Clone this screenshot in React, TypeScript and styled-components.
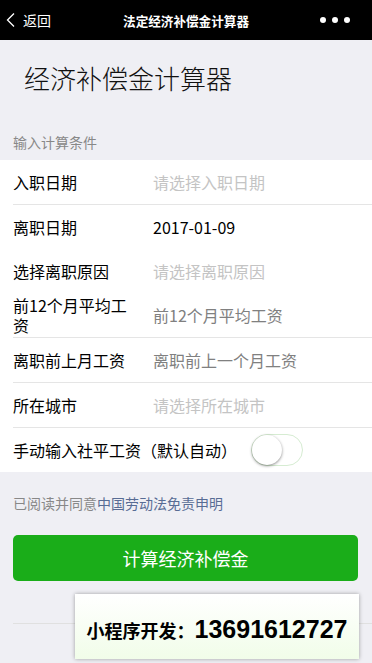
import React from 'react'
import styled, { createGlobalStyle } from 'styled-components'

const GlobalStyle = createGlobalStyle`
  html, body {
    margin: 0;
    padding: 0;
    background: #efeff4;
    font-family: 'Noto Sans CJK SC', 'Noto Sans', sans-serif;
  }
  * {
    box-sizing: border-box;
  }
`

const Page = styled.div`
  display: flex;
  flex-direction: column;
  width: 372px;
  min-height: 663px;
  background: #efeff4;
  position: relative;
`

// top navigation bar
const NavBar = styled.div`
  display: flex;
  align-items: center;
  height: 40px;
  background: #000;
  color: #fff;
  padding: 0 5px;
`

const NavSide = styled.div<{ $end?: boolean }>`
  width: 80px;
  display: flex;
  align-items: center;
  justify-content: ${(p) => (p.$end ? 'flex-end' : 'flex-start')};
`

const BackButton = styled.div`
  display: flex;
  align-items: center;
  gap: 6px;
  font-size: 14px;
  line-height: 20px;
`

const NavTitle = styled.div`
  flex: 1;
  text-align: center;
  font-size: 12.6px;
  font-weight: bold;
`

const Dots = styled.div`
  display: flex;
  gap: 6px;
  padding-right: 17px;
`

const Dot = styled.span`
  width: 6px;
  height: 6px;
  border-radius: 50%;
  background: #fff;
`

const Title = styled.h1`
  margin: 0;
  padding: 22px 24px 0 24px;
  font-size: 26px;
  line-height: 32px;
  font-weight: 300;
  color: #111;
`

const SectionLabel = styled.div`
  padding: 38px 13px 8px 13px;
  font-size: 14px;
  line-height: 20px;
  color: #888;
`

const List = styled.div`
  display: flex;
  flex-direction: column;
  background: #fff;
`

type RowProps = { $divider?: boolean }
const Row = styled.div<RowProps>`
  display: flex;
  align-items: center;
  height: ${(p) => (p.$divider ? '45px' : '44px')};
  margin-left: 13px;
  border-bottom: ${(p) => (p.$divider ? '1px solid #e5e5e5' : 'none')};
`

const Label = styled.div`
  width: 128px;
  margin-right: 12px;
  font-size: 16px;
  line-height: 20px;
  color: #000;
  flex-shrink: 0;
`

const WideLabel = styled(Label)`
  width: auto;
  margin-right: 14px;
`

type ValueProps = { $tone: 'filled' | 'hint' | 'faint' }
const Value = styled.div<ValueProps>`
  font-size: 16px;
  line-height: 20px;
  color: ${(p) =>
    p.$tone === 'filled' ? '#000' : p.$tone === 'hint' ? '#808080' : '#c4c4c4'};
`

const Switch = styled.div`
  width: 52px;
  height: 32px;
  border-radius: 16px;
  border: 1px solid #d6ecd2;
  background: #fff;
  position: relative;
  flex-shrink: 0;
`

const Knob = styled.span`
  position: absolute;
  left: 0;
  top: 0;
  width: 30px;
  height: 30px;
  border-radius: 50%;
  background: #fff;
  box-shadow: 0 1px 3px rgba(0, 0, 0, 0.45);
`

const Agreement = styled.div`
  padding: 21px 13px 0 13px;
  font-size: 14px;
  line-height: 20px;
  color: #888;
`

const Link = styled.span`
  color: #586c94;
`

const PrimaryButton = styled.button`
  margin: 22px 14px 0 13px;
  height: 46px;
  border: none;
  border-radius: 5px;
  background: #1aad19;
  color: #fff;
  font-family: 'Noto Sans CJK SC', sans-serif;
  font-size: 18px;
  cursor: pointer;
`

const FooterLine = styled.div`
  margin: 42px 0 0 13px;
  border-top: 1px solid #e0e0e0;
`

// floating advert card over the bottom of the page
const PromoCard = styled.div`
  position: absolute;
  right: 13px;
  bottom: 4px;
  width: 284px;
  height: 65px;
  display: flex;
  align-items: center;
  justify-content: center;
  padding-top: 6px;
  background: linear-gradient(#ffffff, #f1fde9);
  box-shadow: 0 0 4px rgba(0, 0, 0, 0.35);
  color: #000;
  font-weight: bold;
`

const PromoLabel = styled.span`
  font-size: 18px;
`

const PromoNumber = styled.span`
  font-family: 'Liberation Sans', Arial, sans-serif;
  font-size: 25px;
`

const Chevron = () => (
  <svg width="12" height="16" viewBox="0 0 12 16" fill="none">
    <path d="M9 1.5 L2.5 8 L9 14.5" stroke="#fff" strokeWidth="1.3" />
  </svg>
)

export default function App() {
  return (
    <Page>
      <GlobalStyle />
      <NavBar>
        <NavSide>
          <BackButton>
            <Chevron />
            返回
          </BackButton>
        </NavSide>
        <NavTitle>法定经济补偿金计算器</NavTitle>
        <NavSide $end>
          <Dots>
            <Dot />
            <Dot />
            <Dot />
          </Dots>
        </NavSide>
      </NavBar>

      <Title>经济补偿金计算器</Title>
      <SectionLabel>输入计算条件</SectionLabel>

      <List>
        <Row $divider>
          <Label>入职日期</Label>
          <Value $tone="faint">请选择入职日期</Value>
        </Row>
        <Row>
          <Label>离职日期</Label>
          <Value $tone="filled">2017-01-09</Value>
        </Row>
        <Row>
          <Label>选择离职原因</Label>
          <Value $tone="faint">请选择离职原因</Value>
        </Row>
        <Row $divider>
          <Label>前12个月平均工资</Label>
          <Value $tone="hint">前12个月平均工资</Value>
        </Row>
        <Row $divider>
          <Label>离职前上月工资</Label>
          <Value $tone="hint">离职前上一个月工资</Value>
        </Row>
        <Row $divider>
          <Label>所在城市</Label>
          <Value $tone="faint">请选择所在城市</Value>
        </Row>
        <Row>
          <WideLabel>手动输入社平工资（默认自动）</WideLabel>
          <Switch>
            <Knob />
          </Switch>
        </Row>
      </List>

      <Agreement>
        已阅读并同意<Link>中国劳动法免责申明</Link>
      </Agreement>

      <PrimaryButton>计算经济补偿金</PrimaryButton>
      <FooterLine />

      <PromoCard>
        <PromoLabel>小程序开发：</PromoLabel>
        <PromoNumber>13691612727</PromoNumber>
      </PromoCard>
    </Page>
  )
}
